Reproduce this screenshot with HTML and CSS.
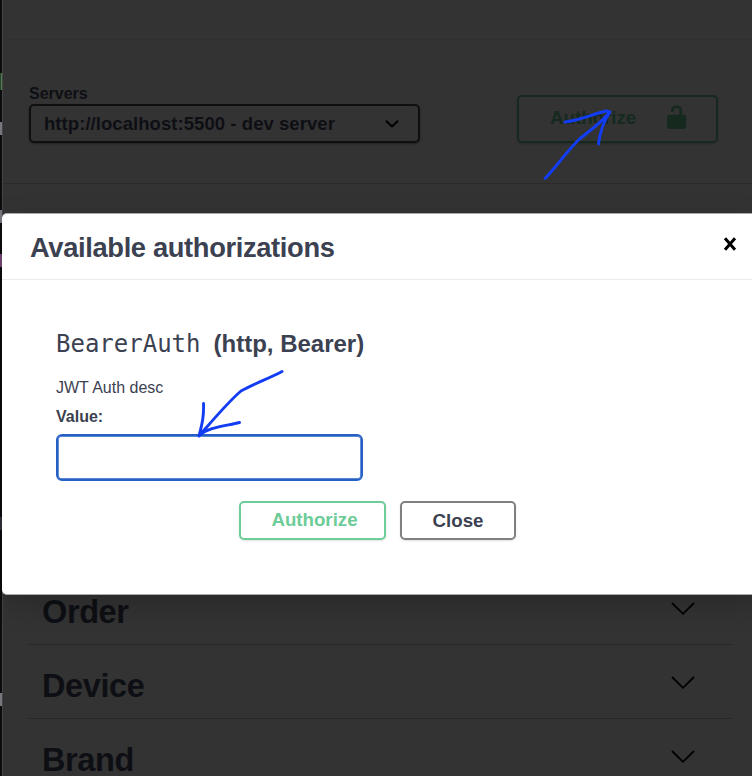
FILE: index.html
```html
<!DOCTYPE html>
<html lang="en">
<head>
<meta charset="utf-8">
<title>Available authorizations</title>
<link rel="stylesheet" href="styles.css">
</head>
<body>
<div class="screen">
  <div class="editor-edge"><i class="frag green"></i><i class="frag grey"></i><i class="frag grey tall"></i><i class="frag purple"></i><i class="frag dim"></i><i class="frag grey last"></i></div>
  <main class="page">
    <div class="topbar"></div>
    <section class="schemes">
      <div class="servers">
        <label class="servers-label"><span>Servers</span></label>
        <div class="select"><span>http://localhost:5500 - dev server</span>
          <svg width="16" height="10" viewBox="0 0 16 10"><path d="M2.5 2.2 8 7.5 13.5 2.2" fill="none" stroke="#000" stroke-width="2" stroke-linecap="round" stroke-linejoin="round"/></svg>
        </div>
      </div>
      <button class="auth-open"><span>Authorize</span>
        <svg width="20" height="25" viewBox="0 0 20 25"><path d="M5.400 6.900V5.700a4.200 4.200 0 0 1 8.400 0V11" fill="none" stroke="#15291f" stroke-width="2.700"/><rect x=".2" y="9.800" width="19" height="14.200" rx="2.400" fill="#15291f"/></svg>
      </button>
    </section>
    <section class="tags">
      <div class="tag"><span>Order</span><svg width="26" height="16" viewBox="0 0 26 16"><path d="M2 2 13 12.8 24 2" fill="none" stroke="#000" stroke-width="1.8"/></svg></div>
      <div class="tag"><span>Device</span><svg width="26" height="16" viewBox="0 0 26 16"><path d="M2 2 13 12.8 24 2" fill="none" stroke="#000" stroke-width="1.8"/></svg></div>
      <div class="tag"><span>Brand</span><svg width="26" height="16" viewBox="0 0 26 16"><path d="M2 2 13 12.8 24 2" fill="none" stroke="#000" stroke-width="1.8"/></svg></div>
    </section>
  </main>
  <div class="modal">
    <header class="modal-head"><h3>Available authorizations</h3>
      <svg width="14" height="16" viewBox="0 0 14 16"><path d="M2 2.300 12 13.700M12 2.300 2 13.700" fill="none" stroke="#000" stroke-width="3"/></svg>
    </header>
    <div class="modal-body">
      <h4><code>BearerAuth</code><span>(http, Bearer)</span></h4>
      <p class="desc">JWT Auth desc</p>
      <label class="value" for="token">Value:</label>
      <input id="token" type="text">
      <div class="actions"><button class="btn authorize"><span>Authorize</span></button><button class="btn close"><span>Close</span></button></div>
    </div>
  </div>
  <svg class="ink" width="752" height="776" viewBox="0 0 752 776" fill="none" stroke="#123df5" stroke-width="2.9" stroke-linecap="round" stroke-linejoin="round">
    <path d="M545 178.500C557 166 567 151 579 139.500C589 131 600 124 610 112M565 122C579 120.500 593 114 606 111L610 112C603 122 600 132 598.500 144"/>
    <path d="M282 371.500C268 379 253 384 241 391C228 402 213 420 199 436C202 424 204 417 203.500 403.500M199 436C208 427 226 426 239.500 422.500"/>
  </svg>
</div>
</body>
</html>
```
FILE: styles.css
```css
* { box-sizing: border-box; }
body { margin: 0; font-family: "Liberation Sans", Arial, sans-serif; color: #3b4151; }
button { font: inherit; font-weight: 700; padding: 0; background: transparent; }
.screen { position: relative; width: 752px; height: 776px; overflow: hidden; display: flex; background: #333; }
.editor-edge { width: 2px; height: 776px; background: #0c0c0f; display: flex; flex-direction: column; }
.frag { flex: none; width: 2px; height: 13px; background: #77787e; }
.green { height: 17px; margin-top: 73px; background: linear-gradient(90deg, #2c452e 50%, #4c7c4c 50%); }
.grey { margin-top: 32px; }
.tall { margin-top: 75px; }
.purple { margin-top: 31px; background: #774778; }
.dim { margin-top: 250px; background: #303039; }
.last { margin-top: 163px; }
.page { flex: 1; height: 776px; border-left: 1px solid #454545; background: #333; color: #0e0f14; }
.topbar { height: 40px; border-bottom: 1px solid #303030; }
.schemes { height: 144px; border-bottom: 1px solid #2b2b2b; padding: 44px 34px 0 26px; display: flex; justify-content: space-between; }
.servers-label { display: block; height: 20px; font-size: 16px; line-height: 19px; font-weight: 700; }
.select { width: 391px; height: 39px; border: 2px solid #0e0f10; border-radius: 5px; display: flex; align-items: center; justify-content: space-between; padding: 0 18px 0 13px; font-size: 18.500px; letter-spacing: .06px; font-weight: 700; box-shadow: 0 1px 2px #222; }
.auth-open { width: 201px; height: 48px; margin-top: 11px; border: 2px solid #15291f; border-radius: 5px; color: #15291f; display: flex; align-items: flex-start; justify-content: space-between; padding: 8px 29px 0 31px; font-size: 18.700px; line-height: 24px; box-shadow: 0 1px 2px #292929; }
.auth-open span { padding-top: 1px; }
.tags { padding: 387px 20px 0 26px; }
.tag { height: 74px; border-bottom: 1px solid #272727; display: flex; align-items: center; justify-content: space-between; padding: 9px 36px 0 13px; font-size: 32.500px; line-height: 30px; letter-spacing: -.4px; font-weight: 700; }
.tag svg { margin-bottom: 7px; }
.modal { position: absolute; left: 2px; top: 213px; width: 760px; height: 382px; background: #fff; border: 1px solid #aaa; border-left: 0; border-radius: 5px; box-shadow: 0 10px 30px rgba(0,0,0,.2); }
.modal-head { height: 66px; border-bottom: 1px solid #ebebeb; display: flex; align-items: center; justify-content: space-between; padding: 2px 24px 0 28px; }
.modal-head svg { margin-bottom: 7px; }
h3 { margin: 0; font-size: 27.300px; line-height: 32px; letter-spacing: -.35px; }
.modal-body { padding: 49px 54px 0; }
h4 { margin: 0; display: flex; align-items: baseline; gap: 13px; font-size: 24px; line-height: 30px; height: 49px; }
code { font-family: "DejaVu Sans Mono", monospace; font-weight: 400; font-size: 24px; }
.desc { margin: 0; font-size: 16px; line-height: 20px; height: 30px; }
.value { display: block; font-size: 16px; line-height: 18px; height: 26px; font-weight: 700; }
input { display: block; width: 307px; height: 47px; border: 2px solid #2660c4; border-radius: 6px; background: #fff; outline: 0; box-shadow: inset 0 0 0 .7px #2660c4; }
.actions { display: flex; gap: 14px; padding: 20px 0 0 183px; }
.btn { height: 39px; border: 2px solid #808080; border-radius: 5px; color: #3b4151; font-size: 18.700px; line-height: 24px; box-shadow: 0 1px 2px rgba(0,0,0,.12); }
.authorize { width: 147px; border-color: #6dcc97; color: #6dcc97; padding: 0 0 1px 4px; }
.close { width: 116px; padding-top: 1px; }
.ink { position: absolute; left: 0; top: 0; pointer-events: none; }
```
